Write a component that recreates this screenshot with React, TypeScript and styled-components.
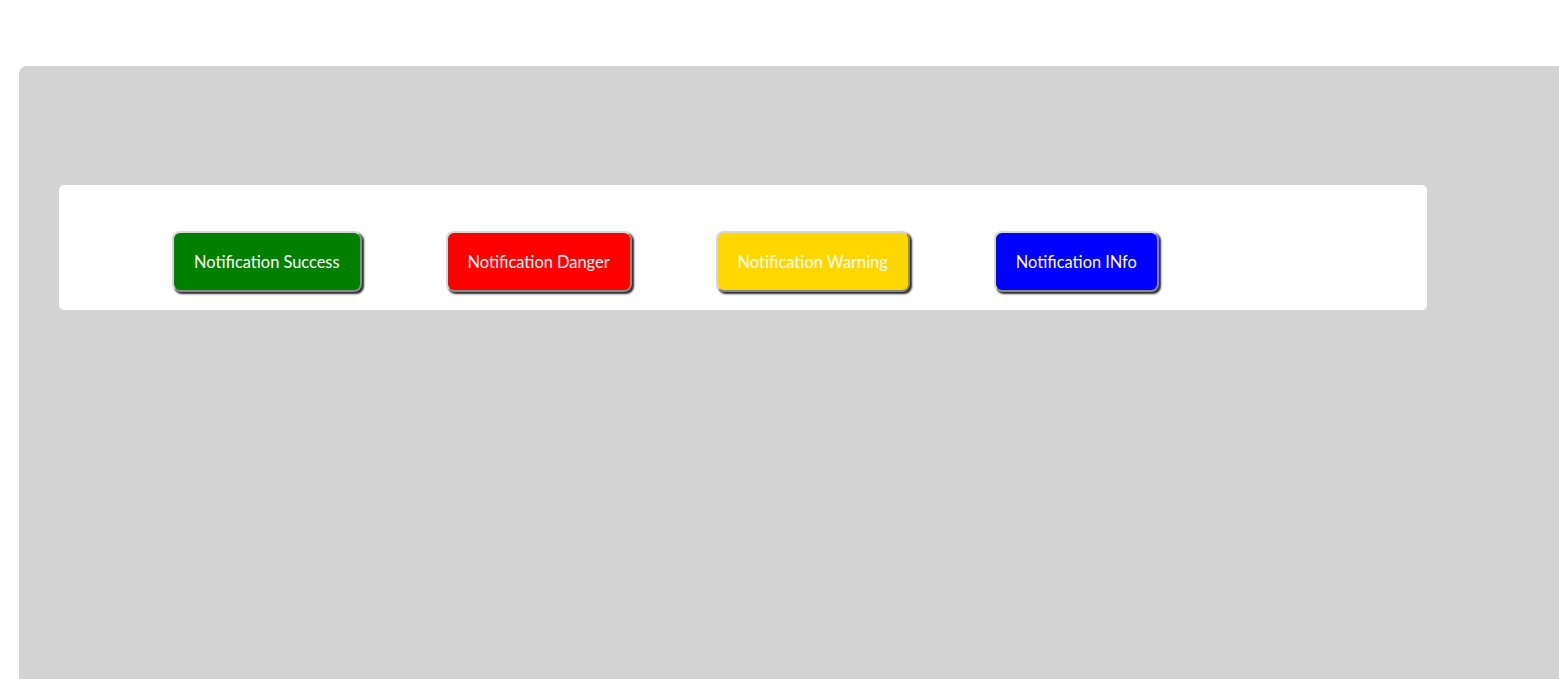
import React from "react";
import styled, { createGlobalStyle } from "styled-components";

const GlobalStyle = createGlobalStyle`
  html, body {
    margin: 0;
    padding: 0;
    background: #ffffff;
    font-family: "Lato", "Liberation Sans", sans-serif;
  }
`;

const Page = styled.div`
  padding: 66px 0 0 19px;
`;

const Panel = styled.div`
  background: #d3d3d3;
  border-radius: 8px 0 0 0;
  min-height: 700px;
  padding: 119px 0 0 40px;
`;

const Card = styled.div`
  width: 1368px;
  box-sizing: border-box;
  background: #ffffff;
  border-radius: 5px;
  padding: 46px 0 18px 113px;
  display: flex;
  gap: 84px;
  align-items: flex-start;
`;

const NotifyButton = styled.button<{ $bg: string }>`
  box-sizing: border-box;
  height: 61px;
  margin: 0;
  padding: 0 20px;
  background: ${(p) => p.$bg};
  color: #ffffff;
  font-family: "Lato", "Liberation Sans", sans-serif;
  font-size: 16.4px;
  border: 2px solid;
  border-color: #d6d6d6 #8a8a8a #8a8a8a #d6d6d6;
  border-radius: 8px;
  box-shadow: 2px 2px 2px #2a2a2a;
  cursor: pointer;
`;

const buttons = [
  { label: "Notification Success", bg: "#008000" },
  { label: "Notification Danger", bg: "#ff0000" },
  { label: "Notification Warning", bg: "#ffd700" },
  { label: "Notification INfo", bg: "#0000ff" },
];

export default function App() {
  return (
    <>
      <GlobalStyle />
      <Page>
        <Panel>
          <Card>
            {buttons.map((b) => (
              <NotifyButton key={b.label} $bg={b.bg}>
                {b.label}
              </NotifyButton>
            ))}
          </Card>
        </Panel>
      </Page>
    </>
  );
}
